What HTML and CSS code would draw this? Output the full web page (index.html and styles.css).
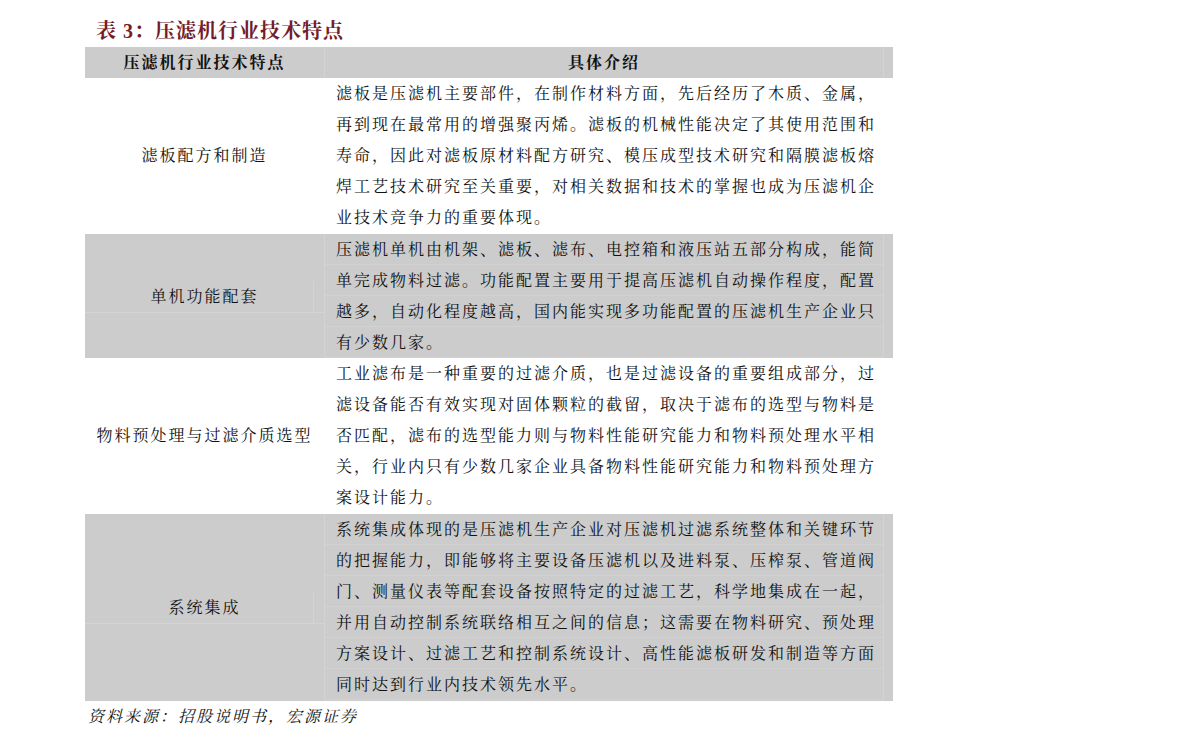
FILE: index.html
```html
<!DOCTYPE html>
<html lang="zh-CN">
<head>
<meta charset="utf-8">
<title>表 3：压滤机行业技术特点</title>
<link rel="stylesheet" href="styles.css">
</head>
<body>
<div class="page">
  <h1 class="title">表 3：压滤机行业技术特点</h1>
  <div class="table">
    <div class="row head">
      <div class="c1"><span class="label">压滤机行业技术特点</span></div>
      <div class="c2 center">具体介绍</div>
    </div>
    <div class="row white pb">
      <div class="c1"><span class="label">滤板配方和制造</span></div>
      <div class="c2">
        <div class="ln">滤板是压滤机主要部件，在制作材料方面，先后经历了木质、金属，</div>
        <div class="ln">再到现在最常用的增强聚丙烯。滤板的机械性能决定了其使用范围和</div>
        <div class="ln">寿命，因此对滤板原材料配方研究、模压成型技术研究和隔膜滤板熔</div>
        <div class="ln">焊工艺技术研究至关重要，对相关数据和技术的掌握也成为压滤机企</div>
        <div class="ln">业技术竞争力的重要体现。</div>
      </div>
    </div>
    <div class="row gray">
      <div class="c1"><span class="label">单机功能配套</span></div>
      <div class="c2">
        <div class="ln">压滤机单机由机架、滤板、滤布、电控箱和液压站五部分构成，能简</div>
        <div class="ln">单完成物料过滤。功能配置主要用于提高压滤机自动操作程度，配置</div>
        <div class="ln">越多，自动化程度越高，国内能实现多功能配置的压滤机生产企业只</div>
        <div class="ln">有少数几家。</div>
      </div>
    </div>
    <div class="row white pb">
      <div class="c1"><span class="label">物料预处理与过滤介质选型</span></div>
      <div class="c2">
        <div class="ln">工业滤布是一种重要的过滤介质，也是过滤设备的重要组成部分，过</div>
        <div class="ln">滤设备能否有效实现对固体颗粒的截留，取决于滤布的选型与物料是</div>
        <div class="ln">否匹配，滤布的选型能力则与物料性能研究能力和物料预处理水平相</div>
        <div class="ln">关，行业内只有少数几家企业具备物料性能研究能力和物料预处理方</div>
        <div class="ln">案设计能力。</div>
      </div>
    </div>
    <div class="row gray pb">
      <div class="c1"><span class="label">系统集成</span></div>
      <div class="c2">
        <div class="ln">系统集成体现的是压滤机生产企业对压滤机过滤系统整体和关键环节</div>
        <div class="ln">的把握能力，即能够将主要设备压滤机以及进料泵、压榨泵、管道阀</div>
        <div class="ln">门、测量仪表等配套设备按照特定的过滤工艺，科学地集成在一起，</div>
        <div class="ln">并用自动控制系统联络相互之间的信息；这需要在物料研究、预处理</div>
        <div class="ln">方案设计、过滤工艺和控制系统设计、高性能滤板研发和制造等方面</div>
        <div class="ln">同时达到行业内技术领先水平。</div>
      </div>
    </div>
  </div>
  <p class="source">资料来源：招股说明书，宏源证券</p>
</div>
</body>
</html>
```

FILE: styles.css
```css
html, body {
  margin: 0;
  padding: 0;
  background: #ffffff;
}

body {
  font-family: "Liberation Serif", "Noto Serif CJK SC", "Noto Sans CJK SC", serif;
  color: #111111;
}

.page {
  width: 808px;
  padding: 16px 0 0 85px;
}

.title {
  margin: 0;
  padding-left: 11px;
  height: 31px;
  line-height: 30px;
  font-size: 20px;
  font-weight: bold;
  letter-spacing: 1px;
  color: #741c2a;
}

.table {
  display: flex;
  flex-direction: column;
}

.row {
  display: grid;
  grid-template-columns: 240px 1fr;
  font-size: 16px;
  line-height: 31px;
  letter-spacing: 2px;
}

.row.pb {
  padding-bottom: 1px;
}

.head,
.gray {
  background: #cccccc;
}

.white {
  background: #ffffff;
}

.c1 {
  display: flex;
  align-items: center;
  justify-content: center;
  border-right: 1px solid transparent;
}

.head .c1,
.gray .c1 {
  border-right-color: #d3d3d3;
}

.head .c1,
.head .c2 {
  font-weight: bold;
}

.label {
  display: block;
  white-space: nowrap;
  height: 31px;
}

.gray .c1 {
  position: relative;
}

.gray .label {
  width: 100%;
  text-align: center;
  border-bottom: 1px solid #d3d3d3;
  margin-top: 1px;
  position: relative;
}

.gray .label::after {
  content: "";
  position: absolute;
  top: 0;
  bottom: 0;
  right: 10px;
  border-right: 1px solid #d3d3d3;
}

.c2 {
  padding-left: 11px;
  margin-right: 9px;
  border-right: 1px solid transparent;
}

.head .c2,
.gray .c2 {
  border-right-color: #d3d3d3;
}

.gray .c2 {
  background-image: repeating-linear-gradient(to bottom, transparent 0, transparent 30px, #d2d2d2 30px, #d2d2d2 31px);
}

.c2.center {
  text-align: center;
  padding-left: 0;
}

.ln {
  white-space: nowrap;
  height: 31px;
}

.source {
  margin: 0;
  padding-left: 3px;
  font-size: 16px;
  line-height: 31px;
  letter-spacing: 2px;
  font-style: italic;
}
```
